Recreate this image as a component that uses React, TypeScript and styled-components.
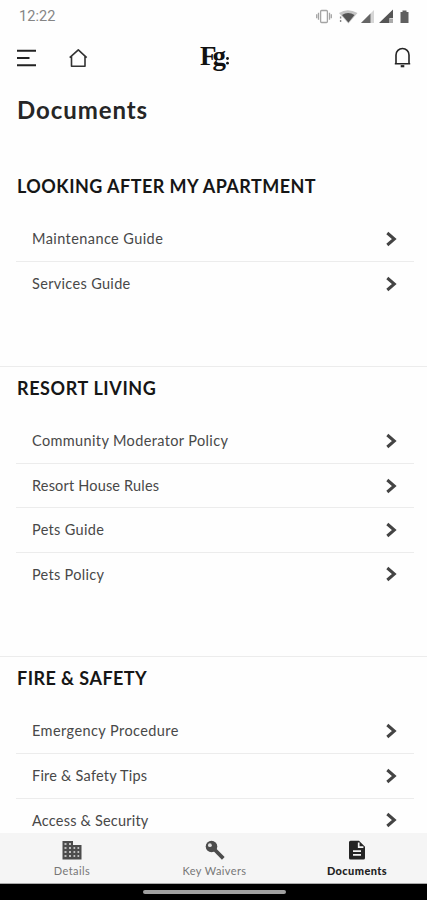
import React from "react";
import styled, { createGlobalStyle } from "styled-components";

const GlobalStyle = createGlobalStyle`
  *, *::before, *::after { box-sizing: border-box; }
  body { margin: 0; background: #fff; font-family: Lato, "Open Sans", sans-serif; }
`;

const Screen = styled.div`
  display: flex;
  flex-direction: column;
  width: 427px;
  height: 900px;
  overflow: hidden;
  background: #fefefe;
`;

const StatusBar = styled.div`
  display: flex;
  align-items: center;
  justify-content: space-between;
  flex: none;
  height: 33px;
  padding: 0 15px 0 19px;
`;

const Clock = styled.span`
  padding-top: 1px;
  color: #858585;
  font-family: Roboto, sans-serif;
  font-size: 14.5px;
  line-height: 18px;
  letter-spacing: 0.1px;
`;

const StatusIcons = styled.svg`
  display: block;
  width: 96px;
  height: 18px;
`;

const TopBar = styled.header`
  display: grid;
  grid-template-columns: 1fr auto 1fr;
  align-items: center;
  flex: none;
  height: 50px;
  padding: 0 16px;
`;

const TopGroup = styled.div<{ $end?: boolean }>`
  display: flex;
  align-items: center;
  justify-content: ${(p) => (p.$end ? "flex-end" : "flex-start")};
  gap: 31px;
`;

const Icon = styled.svg<{ $w: number; $h: number }>`
  display: block;
  flex: none;
  width: ${(p) => p.$w}px;
  height: ${(p) => p.$h}px;
`;

const PageTitle = styled.h1`
  flex: none;
  height: 82px;
  margin: 0;
  padding: 12px 0 0 17px;
  color: #262626;
  font-size: 24px;
  line-height: 30px;
  font-weight: 700;
  letter-spacing: 0.92px;
`;

const Content = styled.main`
  flex: 1;
  min-height: 0;
  overflow: hidden;
`;

const Section = styled.section`
  padding-bottom: 60.4px;

  & + & { border-top: 1px solid #ececec; }
  & + & > h2 { height: 51.6px; }
`;

const SectionTitle = styled.h2<{ $tracking: number }>`
  height: 52px;
  margin: 0;
  padding: 10px 0 0 17px;
  color: #161616;
  font-size: 18px;
  line-height: 23px;
  font-weight: 700;
  letter-spacing: ${(p) => p.$tracking}px;
  white-space: nowrap;
`;

const List = styled.ul`
  margin: 0 13px 0 16px;
  padding: 0;
  list-style: none;
`;

const Row = styled.li`
  display: flex;
  align-items: center;
  justify-content: space-between;
  height: 44.33px;
  padding: 0 17px 0 16px;

  & + & { border-top: 1px solid #ececec; }
`;

const RowLabel = styled.span<{ $tracking: number }>`
  padding-top: 0.6px;
  color: #484848;
  font-size: 14.5px;
  line-height: 20px;
  letter-spacing: ${(p) => p.$tracking}px;
  white-space: nowrap;
`;

const TabBar = styled.nav`
  display: grid;
  grid-template-columns: repeat(3, 142.5px);
  flex: none;
  height: 51px;
  padding-left: 0.75px;
  background: #f5f5f5;
  border-bottom: 1px solid #aaa;
`;

const Tab = styled.div<{ $active?: boolean }>`
  display: flex;
  flex-direction: column;
  align-items: center;
  padding-top: 7px;
  gap: 4px;
  color: ${(p) => (p.$active ? "#252525" : "#4c4c4c")};
`;

const TabLabel = styled.span<{ $active?: boolean }>`
  color: ${(p) => (p.$active ? "#222" : "#777")};
  font-size: 11px;
  line-height: 14px;
  font-weight: ${(p) => (p.$active ? 900 : 400)};
  letter-spacing: 0.4px;
`;

const GestureBar = styled.div`
  display: flex;
  justify-content: center;
  flex: none;
  height: 16px;
  padding: 6px 0 0 1px;
  background: #000;
`;

const GestureHandle = styled.div`
  width: 143px;
  height: 4px;
  border-radius: 2px;
  background: #a0a0a0;
`;

type Item = [label: string, tracking: number];

const sections: { title: string; tracking: number; items: Item[] }[] = [
  {
    title: "LOOKING AFTER MY APARTMENT",
    tracking: 0.46,
    items: [["Maintenance Guide", 0.42], ["Services Guide", 0.33]],
  },
  {
    title: "RESORT LIVING",
    tracking: 0.6,
    items: [
      ["Community Moderator Policy", 0.37],
      ["Resort House Rules", 0.18],
      ["Pets Guide", 0.33],
      ["Pets Policy", 0.3],
    ],
  },
  {
    title: "FIRE & SAFETY",
    tracking: 0.45,
    items: [
      ["Emergency Procedure", 0.42],
      ["Fire & Safety Tips", 0.22],
      ["Access & Security", 0.2],
    ],
  },
];

const Chevron = () => (
  <Icon $w={12} $h={16} viewBox="0 0 12 16" fill="none" stroke="#444" strokeWidth="3">
    <path d="M2.3 2 9.3 8 2.3 14" />
  </Icon>
);

const MenuIcon = () => (
  <Icon $w={21} $h={18} viewBox="0 0 21 18" stroke="#222" strokeWidth="2">
    <path d="M1 1.7H20M1 9H13.5M1 16.3H20" />
  </Icon>
);

const HomeIcon = () => (
  <Icon $w={20} $h={20} viewBox="0 0 20 20" fill="none" stroke="#333" strokeWidth="1.6" strokeLinejoin="round">
    <path d="M1.7 9.7 10.3 1.9 18.7 9.7M3.5 8.3V18.2H17V8.3" />
  </Icon>
);

const BellIcon = () => (
  <Icon $w={18} $h={22} viewBox="0 0 18 22" fill="none" stroke="#252525" strokeWidth="1.6">
    <path d="M3 16.5V8a6.5 6.5 0 0 1 13 0V16.5M1.8 16.7H17.2" />
    <path d="M7.7 19.2h3.6" strokeWidth="2.2" />
  </Icon>
);

const Logo = () => (
  <Icon $w={36} $h={40} viewBox="0 0 36 40" fill="#111">
    <text x="4" y="26.5" fontFamily="Liberation Serif, serif" fontWeight="700" fontSize="27" letterSpacing="-4">
      Fg
    </text>
    <circle cx="31.5" cy="20.5" r="1.4" />
    <circle cx="31.5" cy="25.2" r="1.4" />
  </Icon>
);

const BuildingIcon = () => (
  <Icon $w={20} $h={20} viewBox="0 0 20 20">
    <path fill="currentColor" d="M0.5 1H11V5H19.5V19.5H0.5Z" />
    <path
      fill="#e4e4e4"
      d="M2.5 3.2h2v1.6h-2zM7 3.2h2v1.6h-2zM2.5 7.2h2v1.6h-2zM7 7.2h2v1.6h-2zM2.5 11.2h2v1.6h-2zM7 11.2h2v1.6h-2zM2.5 15.2h2v1.6h-2zM7 15.2h2v1.6h-2zM11.5 7.2h1.7v1.6h-1.7zM15.5 7.2h1.7v1.6h-1.7zM11.5 11.2h1.7v1.6h-1.7zM15.5 11.2h1.7v1.6h-1.7zM11.5 15.2h1.7v1.6h-1.7zM15.5 15.2h1.7v1.6h-1.7z"
    />
  </Icon>
);

const KeyIcon = () => (
  <Icon $w={20} $h={20} viewBox="0 0 20 20">
    <path d="M9 9 18.3 18.3" stroke="currentColor" strokeWidth="3.8" />
    <circle cx="6.5" cy="6.5" r="5.8" fill="currentColor" />
    <circle cx="4.9" cy="5.2" r="1.9" fill="#e0e0e0" />
  </Icon>
);

const DocumentIcon = () => (
  <Icon $w={18} $h={20} viewBox="0 0 18 20">
    <path fill="currentColor" d="M2.5 .8H11L17 6.8V18a1.5 1.5 0 0 1-1.5 1.5H2.5A1.5 1.5 0 0 1 1 18V2.3A1.5 1.5 0 0 1 2.5 .8Z" />
    <path d="M10.7 2.4V7.1H15.4M5 11.1h8M5 14.8h8" fill="none" stroke="#f5f5f5" strokeWidth="1.7" />
  </Icon>
);

export default function App() {
  return (
    <>
      <GlobalStyle />
      <Screen>
        <StatusBar>
          <Clock>12:22</Clock>
          <StatusIcons viewBox="0 0 96 18">
            <g fill="none" stroke="#a4a4a4" strokeWidth="1.3">
              <rect x="4.6" y="2.5" width="6.8" height="12" rx="1" />
              <path d="M2.5 4.8v7M13.5 4.8v7M.7 6.3v4M15.3 6.3v4" />
            </g>
            <path fill="#c4c4c4" d="M23 5Q31.5 -.4 41.5 5L32.4 15.5Z" />
            <path fill="#555" d="M26 7Q32 3.2 38.5 7L32.4 14.5Z" />
            <path stroke="#888" strokeWidth="1.4" strokeDasharray="2 1.5" d="M24.6 8.5v6" />
            <path fill="#d6d6d6" d="M45 15 58 2V15Z" />
            <path fill="#666" d="M45 15 54.5 5.5V15Z" />
            <path fill="#555" d="M63 15 77 1.5V10H73.5V15Z" />
            <path fill="#aaa" d="M74 10.5h3V15h-3z" />
            <path fill="#606060" d="M84.5 4h2V2.4h4V4h2V15h-8z" />
          </StatusIcons>
        </StatusBar>
        <TopBar>
          <TopGroup>
            <MenuIcon />
            <HomeIcon />
          </TopGroup>
          <Logo />
          <TopGroup $end>
            <BellIcon />
          </TopGroup>
        </TopBar>
        <PageTitle>Documents</PageTitle>
        <Content>
          {sections.map((s) => (
            <Section key={s.title}>
              <SectionTitle $tracking={s.tracking}>{s.title}</SectionTitle>
              <List>
                {s.items.map(([label, tracking]) => (
                  <Row key={label}>
                    <RowLabel $tracking={tracking}>{label}</RowLabel>
                    <Chevron />
                  </Row>
                ))}
              </List>
            </Section>
          ))}
        </Content>
        <TabBar>
          <Tab>
            <BuildingIcon />
            <TabLabel>Details</TabLabel>
          </Tab>
          <Tab>
            <KeyIcon />
            <TabLabel>Key Waivers</TabLabel>
          </Tab>
          <Tab $active>
            <DocumentIcon />
            <TabLabel $active>Documents</TabLabel>
          </Tab>
        </TabBar>
        <GestureBar>
          <GestureHandle />
        </GestureBar>
      </Screen>
    </>
  );
}
